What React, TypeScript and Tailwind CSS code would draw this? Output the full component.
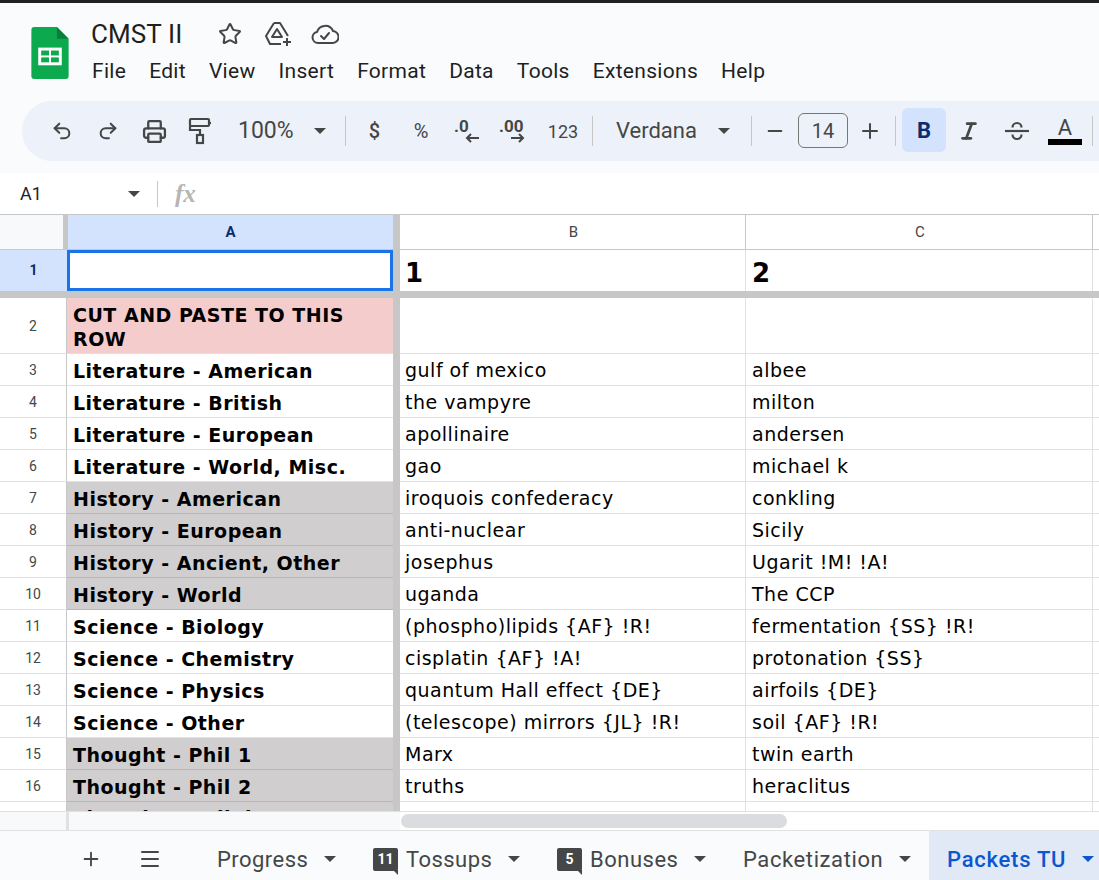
import { Star, Undo2, Redo2, Printer, Plus, Minus, Menu, Italic } from 'lucide-react'

const ui = "font-['Roboto',sans-serif]"
const cell = "font-['DejaVu_Sans','Verdana',sans-serif]"

const rows = [
  { n: 3, a: 'Literature - American', b: 'gulf of mexico', c: 'albee' },
  { n: 4, a: 'Literature - British', b: 'the vampyre', c: 'milton' },
  { n: 5, a: 'Literature - European', b: 'apollinaire', c: 'andersen' },
  { n: 6, a: 'Literature - World, Misc.', b: 'gao', c: 'michael k' },
  { n: 7, a: 'History - American', b: 'iroquois confederacy', c: 'conkling', gray: true },
  { n: 8, a: 'History - European', b: 'anti-nuclear', c: 'Sicily', gray: true },
  { n: 9, a: 'History - Ancient, Other', b: 'josephus', c: 'Ugarit !M! !A!', gray: true },
  { n: 10, a: 'History - World', b: 'uganda', c: 'The CCP', gray: true },
  { n: 11, a: 'Science - Biology', b: '(phospho)lipids {AF} !R!', c: 'fermentation {SS} !R!' },
  { n: 12, a: 'Science - Chemistry', b: 'cisplatin {AF} !A!', c: 'protonation {SS}' },
  { n: 13, a: 'Science - Physics', b: 'quantum Hall effect {DE}', c: 'airfoils {DE}' },
  { n: 14, a: 'Science - Other', b: '(telescope) mirrors {JL} !R!', c: 'soil {AF} !R!' },
  { n: 15, a: 'Thought - Phil 1', b: 'Marx', c: 'twin earth', gray: true },
  { n: 16, a: 'Thought - Phil 2', b: 'truths', c: 'heraclitus', gray: true },
]

function Caret({ className = 'border-t-[#444746]' }: { className?: string }) {
  return <span className={`block w-0 h-0 border-x-[6px] border-x-transparent border-t-[6px] ${className}`} />
}

function Sep({ className = '' }: { className?: string }) {
  return <span className={`block w-px h-[30px] bg-[#c7c7c7] shrink-0 ${className}`} />
}

function Slot({ children, className = 'w-[46px]' }: { children: React.ReactNode; className?: string }) {
  return <span className={`flex items-center justify-center shrink-0 h-full text-[#444746] ${className}`}>{children}</span>
}

function Row({ num, h, a, b, c, aClass = '' }: { num: number; h: string; a: React.ReactNode; b: React.ReactNode; c: React.ReactNode; aClass?: string }) {
  return (
    <div className={`flex shrink-0 ${h}`}>
      <div className={`w-[67px] shrink-0 flex items-center justify-center pt-px border-b border-b-[#e1e1e1] border-r border-r-[#c7c7c7] text-[#444746] text-[14px] ${ui}`}>{num}</div>
      <div className={`w-[326px] shrink-0 flex items-center pl-[6px] pt-[2px] border-b text-[19px] tracking-[0.5px] font-bold leading-[24px] text-black whitespace-nowrap ${cell} ${aClass}`}>{a}</div>
      <div className="w-[7px] shrink-0 bg-[#c7c7c7]" />
      <div className={`w-[346px] shrink-0 flex items-center pl-[5px] pt-[2px] border-b border-r border-[#e1e1e1] text-[19px] tracking-[0.5px] text-black ${cell}`}>{b}</div>
      <div className={`w-[347px] shrink-0 flex items-center pl-[6px] pt-[2px] border-b border-r border-[#e1e1e1] text-[19px] tracking-[0.5px] text-black ${cell}`}>{c}</div>
      <div className="flex-1 border-b border-[#e1e1e1]" />
    </div>
  )
}

function Tab({ label, badge, className, caretClass }: { label: string; badge?: string; className: string; caretClass?: string }) {
  return (
    <div className={`flex items-center h-full shrink-0 pt-[7px] text-[22px] ${className}`}>
      {badge && (
        <span className="relative mr-[8px] w-[25px] h-[23px] flex items-center justify-center rounded-[2px] bg-[#444746] text-white text-[14px] font-bold tracking-normal">
          {badge}
          <span className="absolute right-0 -bottom-[4px] w-0 h-0 border-l-[5px] border-l-transparent border-t-[5px] border-t-[#444746]" />
        </span>
      )}
      <span>{label}</span>
      <span className="ml-[16px]"><Caret className={caretClass} /></span>
    </div>
  )
}

export default function App() {
  return (
    <div className={`w-[1099px] h-[880px] overflow-hidden flex flex-col bg-white ${ui}`}>
      <div className="h-[3px] bg-[#202124] shrink-0" />

      {/* Title + menu */}
      <div className="h-[170px] shrink-0 bg-[#f9fbfd] flex flex-col">
        <div className="flex h-[98px] shrink-0">
          <svg className="ml-[31px] mt-[24px] shrink-0" width="38" height="52" viewBox="0 0 38 53">
            <path d="M3 0h23l12 12v38a3 3 0 0 1-3 3H3a3 3 0 0 1-3-3V3a3 3 0 0 1 3-3z" fill="#0da94e" />
            <path d="M26 0l12 12H26z" fill="#0a7f3b" />
            <rect x="7" y="21" width="24" height="18" fill="#fff" />
            <rect x="10" y="24" width="8" height="5" fill="#0da94e" />
            <rect x="20" y="24" width="8" height="5" fill="#0da94e" />
            <rect x="10" y="31" width="8" height="5" fill="#0da94e" />
            <rect x="20" y="31" width="8" height="5" fill="#0da94e" />
          </svg>
          <div className="ml-[22px] flex flex-col">
            <div className="flex items-center mt-[13px] h-[36px]">
              <span className="text-[26px] tracking-[0.1px] text-[#1f1f1f] w-[127px]">CMST II</span>
              <Star size={24} strokeWidth={2} className="text-[#444746]" />
              <svg className="ml-[22px]" width="28" height="26" viewBox="0 0 28 26" fill="none" stroke="#444746" strokeWidth="2" strokeLinejoin="round">
                <path d="M10 2h6l8 13M10 2L2 15l4 8h11" />
                <path d="M13 8l-5 8h10z" />
                <path d="M23 17v8M19 21h8" />
              </svg>
              <svg className="ml-[19px]" width="28" height="22" viewBox="0 0 28 22" fill="none" stroke="#444746" strokeWidth="2" strokeLinejoin="round" strokeLinecap="round">
                <path d="M7 20a5.5 5.5 0 0 1-1-10.9A8.5 8.5 0 0 1 22 8a6 6 0 0 1-1 12z" />
                <path d="M10 13l3 3 5-6" />
              </svg>
            </div>
            <div className="flex mt-[5px] ml-px text-[21px] tracking-[0.3px] text-[#1f1f1f] gap-[23px] leading-[28px]">
              <span>File</span><span>Edit</span><span>View</span><span>Insert</span><span>Format</span><span>Data</span><span>Tools</span><span>Extensions</span><span>Help</span>
            </div>
          </div>
        </div>

        {/* Toolbar */}
        <div className="ml-[22px] h-[60px] w-[1077px] shrink-0 rounded-l-[30px] bg-[#edf2fa] flex items-center pl-[17px] text-[#444746]">
          <Slot><Undo2 size={22} strokeWidth={2.2} /></Slot>
          <Slot><Redo2 size={22} strokeWidth={2.2} /></Slot>
          <Slot><Printer size={25} strokeWidth={2.2} /></Slot>
          <Slot>
            <svg width="24" height="28" viewBox="0 0 24 28" fill="none" stroke="#444746" strokeWidth="2.2">
              <rect x="2" y="2" width="19" height="7" rx="1" />
              <path d="M21 6h2M12 9v0M2 9v4h10v5" />
              <rect x="9" y="18" width="6" height="8" />
            </svg>
          </Slot>
          <span className="ml-[15px] w-[56px] text-[23px] whitespace-nowrap">100%</span>
          <span className="ml-[20px]"><Caret /></span>
          <Sep className="ml-[19px]" />
          <span className="w-[5px]" />
          <Slot className="w-[47px] text-[20px] font-medium"><span>$</span></Slot>
          <Slot className="w-[46px] text-[20px]"><span>%</span></Slot>
          <Slot className="w-[46px]">
            <svg width="28" height="28" viewBox="0 0 28 28"><text x="1" y="15" fontSize="17" fontWeight="700" fill="#444746">.0</text><path d="M26 21H14M18 17l-4 4 4 4" fill="none" stroke="#444746" strokeWidth="2" /></svg>
          </Slot>
          <Slot className="w-[46px]">
            <svg width="28" height="28" viewBox="0 0 28 28"><text x="0" y="15" fontSize="17" fontWeight="700" fill="#444746">.00</text><path d="M12 21h12M20 17l4 4-4 4" fill="none" stroke="#444746" strokeWidth="2" /></svg>
          </Slot>
          <Slot className="w-[54px] text-[18px]"><span>123</span></Slot>
          <Sep className="ml-[2px]" />
          <span className="ml-[23px] w-[81px] pb-[2px] text-[22px]">Verdana</span>
          <span className="ml-[21px]"><Caret /></span>
          <Sep className="ml-[21px]" />
          <Slot className="w-[46px]"><Minus size={22} /></Slot>
          <span className="w-[50px] h-[35px] mb-px border border-[#747775] rounded-[6px] flex items-center justify-center text-[20px]">14</span>
          <Slot className="w-[44px]"><Plus size={24} /></Slot>
          <Sep className="ml-[3px]" />
          <span className="ml-[6px] mb-[2px] w-[44px] h-[44px] rounded-[6px] bg-[#d3e3fd] text-[#0b2d6b] text-[22px] font-bold flex items-center justify-center shrink-0">B</span>
          <Slot className="w-[46px]"><Italic size={22} strokeWidth={3} /></Slot>
          <Slot className="w-[50px]">
            <svg width="26" height="24" viewBox="0 0 26 24" fill="none" stroke="#444746" strokeWidth="2.2">
              <path d="M1 12h24" />
              <path d="M8.500 8.500a4.500 4.500 0 0 1 9 0M8.500 15.500a4.500 4.500 0 0 0 9 0" />
            </svg>
          </Slot>
          <span className="w-[46px] h-full flex flex-col items-center justify-center shrink-0">
            <span className="text-[22px] leading-[22px]">A</span>
            <span className="block w-[34px] h-[6px] bg-black" />
          </span>
          <Sep className="ml-[4px]" />
        </div>
      </div>

      {/* Formula bar */}
      <div className="h-[42px] shrink-0 bg-white flex items-center border-b border-[#c7c7c7]">
        <span className="ml-[20px] w-[108px] text-[18px] text-[#1f1f1f]">A1</span>
        <Caret />
        <span className="block ml-[17px] w-px h-[26px] bg-[#c7c7c7]" />
        <span className="ml-[17px] text-[25px] italic font-bold text-[#b5b5b5] font-['Liberation_Serif',serif]">fx</span>
      </div>

      {/* Grid */}
      <div className="flex-1 min-h-0 flex flex-col overflow-hidden">
        <div className="flex h-[35px] shrink-0 border-b border-[#c7c7c7]">
          <div className="w-[63px] bg-[#f8f9fa] shrink-0" />
          <div className="w-[5px] bg-[#c7c7c7] shrink-0" />
          <div className="w-[325px] shrink-0 bg-[#d3e3fd] flex items-center justify-center text-[15px] font-bold text-[#0b2d6b]">A</div>
          <div className="w-[7px] shrink-0 bg-[#c7c7c7]" />
          <div className="w-[346px] shrink-0 flex items-center justify-center pl-[2px] text-[15px] text-[#444746] border-r border-[#c7c7c7]">B</div>
          <div className="w-[347px] shrink-0 flex items-center justify-center pl-[2px] text-[15px] text-[#444746] border-r border-[#c7c7c7]">C</div>
        </div>

        <div className="flex h-[41px] shrink-0">
          <div className="w-[67px] shrink-0 bg-[#d3e3fd] flex items-center justify-center text-[14px] font-bold text-[#0b2d6b]">1</div>
          <div className="w-[326px] shrink-0 border-[3px] border-[#1a73e8] bg-white" />
          <div className="w-[7px] shrink-0 bg-[#c7c7c7]" />
          <div className={`w-[346px] shrink-0 pl-[5px] pt-[5px] flex items-center border-r border-[#e1e1e1] text-[26px] font-bold text-black ${cell}`}>1</div>
          <div className={`w-[347px] shrink-0 pl-[6px] pt-[5px] flex items-center border-r border-[#e1e1e1] text-[26px] font-bold text-black ${cell}`}>2</div>
        </div>
        <div className="h-[7px] shrink-0 bg-[#c7c7c7]" />

        <Row
          num={2}
          h="h-[56px]"
          a={<span className="block w-[310px] whitespace-normal">CUT AND PASTE TO THIS ROW</span>}
          b=""
          c=""
          aClass="bg-[#f4cccc] border-b-[#e1e1e1]"
        />
        {rows.map((r) => (
          <Row
            key={r.n}
            num={r.n}
            h="h-[32px]"
            a={r.a}
            b={r.b}
            c={r.c}
            aClass={r.gray ? 'bg-[#d0cece] border-b-[#b7b7b7]' : 'border-b-[#e1e1e1]'}
          />
        ))}
        <div className="flex h-[9px] shrink-0 overflow-hidden">
          <div className="w-[67px] shrink-0 border-r border-[#c7c7c7]" />
          <div className={`w-[326px] shrink-0 pl-[6px] pt-[4px] bg-[#d0cece] text-[19px] tracking-[0.5px] font-bold leading-[24px] text-black ${cell}`}>Thought - Religion</div>
          <div className="w-[7px] shrink-0 bg-[#c7c7c7]" />
          <div className="w-[346px] shrink-0 border-r border-[#e1e1e1]" />
          <div className="w-[347px] shrink-0 border-r border-[#e1e1e1]" />
        </div>
      </div>

      {/* Horizontal scrollbar */}
      <div className="h-[19px] shrink-0 flex border-t border-[#e1e1e1]">
        <div className="w-[66px] bg-[#f8f9fa] shrink-0" />
        <div className="w-[3px] bg-[#e1e1e1] shrink-0" />
        <div className="w-[331px] bg-[#f8f9fa] shrink-0" />
        <div className="flex-1 flex items-center">
          <span className="block ml-px w-[386px] h-[14px] rounded-full bg-[#dadce0]" />
        </div>
      </div>

      {/* Sheet tabs */}
      <div className="h-[50px] shrink-0 bg-[#f9fbfd] border-t border-[#e1e1e1] flex items-center text-[#444746]">
        <Plus size={22} className="ml-[80px] mt-[6px] shrink-0" />
        <Menu size={24} className="ml-[36px] mt-[6px] shrink-0" />
        <div className="ml-[55px] flex items-center h-full">
          <Tab label="Progress" className="w-[156px] tracking-[0.45px]" />
          <Tab label="Tossups" badge="11" className="w-[184px] tracking-[0.45px]" />
          <Tab label="Bonuses" badge="5" className="w-[186px] tracking-[0.5px]" />
          <Tab label="Packetization" className="w-[186px] tracking-[0.6px]" />
          <Tab label="Packets TU" className="w-[170px] bg-[#e1e9f7] pl-[18px] tracking-[0.75px] text-[#0b57d0] font-medium" caretClass="border-t-[#0b57d0]" />
        </div>
      </div>
    </div>
  )
}
